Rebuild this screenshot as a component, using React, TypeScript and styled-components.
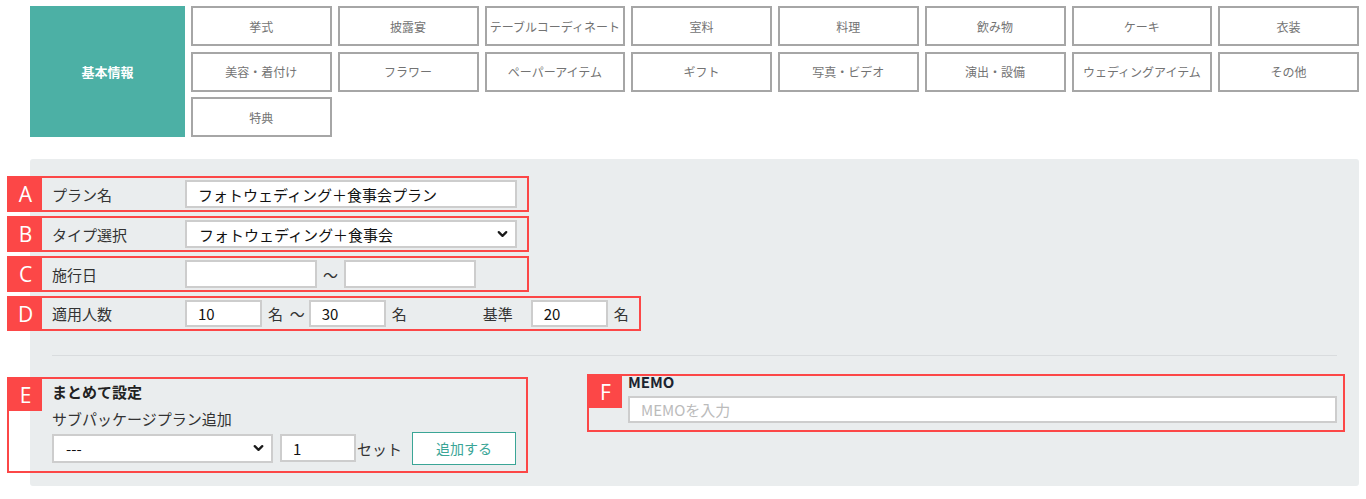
import React from "react";
import styled, { createGlobalStyle } from "styled-components";
import { ChevronDown } from "lucide-react";

const GlobalStyle = createGlobalStyle`
  body {
    margin: 0;
    background: #fff;
    font-family: "Noto Sans CJK JP", "Noto Sans", sans-serif;
    color: #333;
  }
  * {
    box-sizing: border-box;
  }
`;

const RED = "#fc4747";
const TEAL = "#4cb0a5";

const Page = styled.div`
  padding: 6px 7px 12px 30px;
`;

const CategoryNav = styled.nav`
  display: flex;
  gap: 6px;
`;

const NavHeading = styled.div`
  flex: none;
  width: 155px;
  background: ${TEAL};
  color: #fff;
  font-size: 13px;
  font-weight: bold;
  display: flex;
  align-items: center;
  justify-content: center;
`;

const NavGrid = styled.div`
  flex: 1;
  display: grid;
  grid-template-columns: repeat(8, 1fr);
  grid-auto-rows: 40px;
  column-gap: 6px;
  row-gap: 5.5px;
`;

const NavButton = styled.button`
  border: 2px solid #a6a6a6;
  background: #fff;
  color: #737373;
  font-family: inherit;
  font-size: 12px;
  padding: 0;
  white-space: nowrap;
  overflow: visible;
  cursor: pointer;
`;

const Panel = styled.section`
  margin-top: 22px;
  background: #eaedee;
  border-radius: 3px;
  padding: 17px 22px 13px;
`;

const Rows = styled.div`
  display: flex;
  flex-direction: column;
  gap: 4px;
`;

const MarkedRow = styled.div`
  display: flex;
  align-items: stretch;
  width: fit-content;
  margin-left: -45px;
  border: 2px solid ${RED};
  padding-right: 10px;
`;

const Badge = styled.div<{ $square?: boolean }>`
  flex: none;
  width: 33px;
  height: ${(p) => (p.$square ? "32px" : "auto")};
  background: ${RED};
  color: #fff;
  font-family: "Open Sans", "Noto Sans", sans-serif;
  font-size: 21px;
  display: flex;
  align-items: center;
  justify-content: center;
`;

const RowLabel = styled.div`
  flex: none;
  width: 143px;
  padding-left: 10px;
  font-size: 15px;
  color: #333;
  display: flex;
  align-items: center;
`;

const Field = styled.div`
  min-width: 332px;
  padding: 2px 0;
  display: flex;
  align-items: center;
`;

const TextInput = styled.input<{ $w?: number; $h?: number }>`
  width: ${(p) => (p.$w ? `${p.$w}px` : "100%")};
  height: ${(p) => p.$h ?? 28}px;
  border: 2px solid #cdcdcd;
  background: #fff;
  padding: 0 11px;
  font-family: inherit;
  font-size: 15px;
  color: #111;
  outline: none;
  &::placeholder {
    color: #bbb;
  }
`;

const SelectWrap = styled.div<{ $w: number; $h: number }>`
  position: relative;
  width: ${(p) => p.$w}px;
  height: ${(p) => p.$h}px;
  flex: none;
`;

const Select = styled.select`
  appearance: none;
  width: 100%;
  height: 100%;
  border: 2px solid #cdcdcd;
  background: #fff;
  padding: 0 30px 0 12px;
  font-family: inherit;
  font-size: 15px;
  color: #111;
  outline: none;
`;

const Chevron = styled(ChevronDown)`
  position: absolute;
  right: 7px;
  top: 50%;
  transform: translateY(-50%);
  pointer-events: none;
  color: #1a1a1a;
`;

const Unit = styled.span<{ $ml?: number; $mr?: number }>`
  font-size: 15px;
  color: #333;
  white-space: pre;
  margin-left: ${(p) => p.$ml ?? 0}px;
  margin-right: ${(p) => p.$mr ?? 0}px;
`;

const Divider = styled.hr`
  margin: 24px 0 0;
  border: none;
  height: 1px;
  background: #d9dcde;
`;

const BottomRow = styled.div`
  display: flex;
  align-items: flex-start;
  margin: 18px -8px 0 -45px;
`;

const Block = styled.div<{ $w?: number; $offset?: number; $gap?: number }>`
  display: flex;
  align-items: flex-start;
  border: 2px solid ${RED};
  width: ${(p) => (p.$w ? `${p.$w}px` : "auto")};
  flex: ${(p) => (p.$w ? "none" : "1")};
  margin-top: ${(p) => p.$offset ?? 0}px;
  margin-left: ${(p) => p.$gap ?? 0}px;
`;

const SettingBody = styled.div`
  flex: 1;
  padding: 2px 10px 6px 10px;
`;

const BlockTitle = styled.div`
  font-size: 15px;
  font-weight: bold;
  line-height: 22px;
  color: #222;
  margin-bottom: 5px;
`;

const BlockSub = styled.div`
  font-size: 15px;
  line-height: 22px;
  color: #333;
  margin-bottom: 1px;
`;

const Controls = styled.div`
  display: flex;
  align-items: center;
  height: 34px;
`;

const CountInput = styled(TextInput)`
  margin-left: 7px;
`;

const AddButton = styled.button`
  width: 104px;
  height: 33px;
  margin-left: 10px;
  border: 1px solid #3aa596;
  background: #fff;
  color: #3aa596;
  font-family: inherit;
  font-size: 14px;
  cursor: pointer;
`;

const MemoBody = styled.div`
  flex: 1;
  padding: 0 6px 7px 6px;
`;

const MemoTitle = styled.div`
  font-size: 15px;
  font-weight: bold;
  line-height: 14px;
  color: #1c2430;
  margin: -1px 0 7px;
`;

const categories = [
  "挙式",
  "披露宴",
  "テーブルコーディネート",
  "室料",
  "料理",
  "飲み物",
  "ケーキ",
  "衣装",
  "美容・着付け",
  "フラワー",
  "ペーパーアイテム",
  "ギフト",
  "写真・ビデオ",
  "演出・設備",
  "ウェディングアイテム",
  "その他",
  "特典",
];

export default function App() {
  return (
    <Page>
      <GlobalStyle />
      <CategoryNav>
        <NavHeading>基本情報</NavHeading>
        <NavGrid>
          {categories.map((c) => (
            <NavButton key={c} type="button">
              {c}
            </NavButton>
          ))}
        </NavGrid>
      </CategoryNav>

      <Panel>
        <Rows>
          <MarkedRow>
            <Badge>A</Badge>
            <RowLabel>プラン名</RowLabel>
            <Field>
              <TextInput $w={332} defaultValue="フォトウェディング＋食事会プラン" />
            </Field>
          </MarkedRow>

          <MarkedRow>
            <Badge>B</Badge>
            <RowLabel>タイプ選択</RowLabel>
            <Field>
              <SelectWrap $w={332} $h={28}>
                <Select defaultValue="photo">
                  <option value="photo">フォトウェディング＋食事会</option>
                </Select>
                <Chevron size={15} strokeWidth={3.6} />
              </SelectWrap>
            </Field>
          </MarkedRow>

          <MarkedRow>
            <Badge>C</Badge>
            <RowLabel>施行日</RowLabel>
            <Field>
              <TextInput $w={132} />
              <Unit $ml={6} $mr={6}>～</Unit>
              <TextInput $w={132} />
            </Field>
          </MarkedRow>

          <MarkedRow>
            <Badge>D</Badge>
            <RowLabel>適用人数</RowLabel>
            <Field>
              <TextInput $w={77} $h={27} defaultValue="10" />
              <Unit $ml={6} $mr={4}>名  ～</Unit>
              <TextInput $w={77} $h={27} defaultValue="30" />
              <Unit $ml={6}>名</Unit>
              <Unit $ml={76} $mr={18}>基準</Unit>
              <TextInput $w={77} $h={27} defaultValue="20" />
              <Unit $ml={6}>名</Unit>
            </Field>
          </MarkedRow>
        </Rows>

        <Divider />

        <BottomRow>
          <Block $w={521} $offset={3}>
            <Badge $square>E</Badge>
            <SettingBody>
              <BlockTitle>まとめて設定</BlockTitle>
              <BlockSub>サブパッケージプラン追加</BlockSub>
              <Controls>
                <SelectWrap $w={221} $h={29}>
                  <Select defaultValue="none">
                    <option value="none">---</option>
                  </Select>
                  <Chevron size={15} strokeWidth={3.6} />
                </SelectWrap>
                <CountInput $w={76} defaultValue="1" />
                <Unit $ml={1}>セット</Unit>
                <AddButton type="button">追加する</AddButton>
              </Controls>
            </SettingBody>
          </Block>

          <Block $gap={59}>
            <Badge $square>F</Badge>
            <MemoBody>
              <MemoTitle>MEMO</MemoTitle>
              <TextInput $h={27} placeholder="MEMOを入力" />
            </MemoBody>
          </Block>
        </BottomRow>
      </Panel>
    </Page>
  );
}
